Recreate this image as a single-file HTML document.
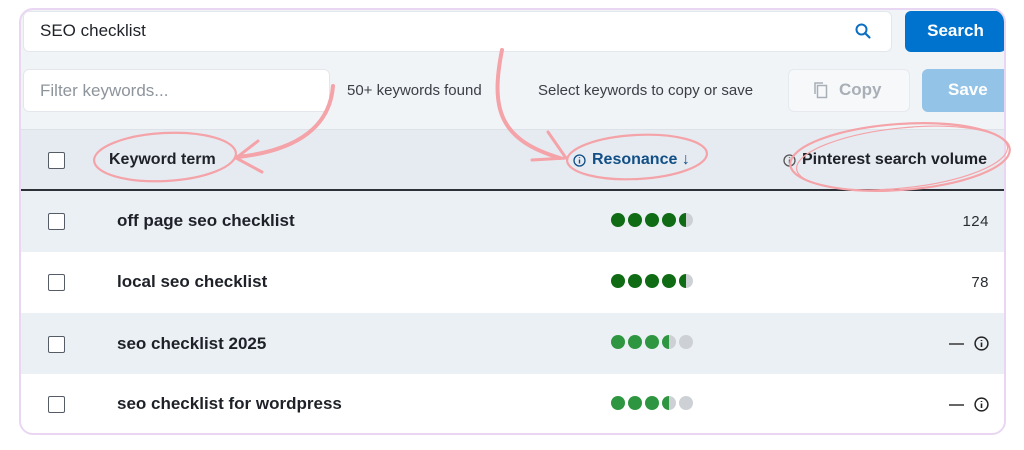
<!DOCTYPE html>
<html><head><style>
*{margin:0;padding:0;box-sizing:border-box}
body{width:1024px;height:450px;background:#fff;font-family:"Liberation Sans",sans-serif;position:relative;overflow:hidden;color:#1e2228}
.frame{position:absolute;left:19px;top:8px;width:987px;height:427px;border:2px solid #e9d6f3;border-radius:14px;background:#f1f4f7;overflow:hidden}
.abs{position:absolute}
.inp{background:#fff;border:1px solid #e3e7ec;border-radius:6px}
.row{position:absolute;left:0;width:985px;height:61px}
.cb{position:absolute;left:27px;width:17px;height:17px;border:1.5px solid #555c66;border-radius:2px;background:#fff}
.kw{position:absolute;left:96px;font-weight:bold;font-size:17px;line-height:20px}
.dots{position:absolute;left:590px;display:flex;gap:3px}
.d{width:14px;height:14px;border-radius:50%}
.g1{background:#0f6b14}.g2{background:#2e9640}.gr{background:#cdd1d6}
.h1{background:linear-gradient(90deg,#0f6b14 50%,#cdd1d6 50%)}
.h2{background:linear-gradient(90deg,#2e9640 50%,#cdd1d6 50%)}
.num{position:absolute;right:17px;font-size:15px;line-height:20px;color:#2a2e34;letter-spacing:0.5px}
.dash{position:absolute;right:17px;display:flex;align-items:center;gap:10px}
</style></head><body>
<div class="frame">
 <div class="abs inp" style="left:2px;top:1px;width:869px;height:41px"></div>
 <div class="abs" style="left:19px;top:11px;font-size:17px">SEO checklist</div>
 <svg class="abs" style="left:833px;top:12px" width="18" height="18" viewBox="0 0 18 18"><circle cx="7.5" cy="7.5" r="5" fill="none" stroke="#0a6fc2" stroke-width="2"/><path d="M11 11l4.5 4.5" stroke="#0a6fc2" stroke-width="2.2" stroke-linecap="round"/></svg>
 <div class="abs" style="left:884px;top:1px;width:101px;height:41px;background:#0073cf;border-radius:6px;color:#fff;font-weight:bold;font-size:17px;text-align:center;line-height:40px">Search</div>
 <div class="abs inp" style="left:2px;top:59px;width:307px;height:43px"></div>
 <div class="abs" style="left:19px;top:71px;font-size:17px;color:#8e949c">Filter keywords...</div>
 <div class="abs" style="left:326px;top:72px;font-size:15px;color:#3a3f46">50+ keywords found</div>
 <div class="abs" style="left:517px;top:72px;font-size:15px;color:#3a3f46">Select keywords to copy or save</div>
 <div class="abs" style="left:767px;top:59px;width:122px;height:43px;border:1px solid #e6e9ed;border-radius:6px;background:#f6f8fa"></div>
 <svg class="abs" style="left:792px;top:71px" width="16" height="18" viewBox="0 0 16 18"><rect x="4.5" y="4.5" width="9" height="12" fill="none" stroke="#a9afb7" stroke-width="1.5"/><path d="M2 13V2h8" fill="none" stroke="#a9afb7" stroke-width="1.5"/></svg>
 <div class="abs" style="left:818px;top:70px;font-size:17px;font-weight:bold;color:#a9afb7">Copy</div>
 <div class="abs" style="left:901px;top:59px;width:90px;height:43px;border-radius:6px;background:#93c3e6;color:#fff;font-weight:bold;font-size:17px;line-height:42px;padding-left:26px">Save</div>
 <div class="abs" style="left:0;top:119px;width:985px;height:62px;background:#e6ebf1;border-top:1px solid #dde2e8;border-bottom:2px solid #2c3138"></div>
 <div class="cb" style="top:142px"></div>
 <div class="abs" style="left:88px;top:141px;font-weight:bold;font-size:16px">Keyword term</div>
 <svg class="abs" style="left:552px;top:144px" width="13" height="13" viewBox="0 0 13 13"><circle cx="6.5" cy="6.5" r="5.5" fill="none" stroke="#114f86" stroke-width="1.3"/><path d="M6.5 5.5v4M6.5 3.3v.8" stroke="#114f86" stroke-width="1.4"/></svg>
 <div class="abs" style="left:571px;top:141px;font-weight:bold;font-size:16px;color:#114f86">Resonance ↓</div>
 <svg class="abs" style="left:762px;top:144px" width="13" height="13" viewBox="0 0 13 13"><circle cx="6.5" cy="6.5" r="5.5" fill="none" stroke="#555" stroke-width="1.3"/><path d="M6.5 5.5v4M6.5 3.3v.8" stroke="#555" stroke-width="1.4"/></svg>
 <div class="abs" style="left:781px;top:141px;font-weight:bold;font-size:16px">Pinterest search volume</div>
 <div class="row" style="top:181px;background:#ebf0f5"><div class="cb" style="top:22px"></div><div class="kw" style="top:20px">off page seo checklist</div><div class="dots" style="top:22px"><div class="d g1"></div><div class="d g1"></div><div class="d g1"></div><div class="d g1"></div><div class="d h1"></div></div><div class="num" style="top:21px">124</div></div>
 <div class="row" style="top:242px;background:#fff"><div class="cb" style="top:22px"></div><div class="kw" style="top:20px">local seo checklist</div><div class="dots" style="top:22px"><div class="d g1"></div><div class="d g1"></div><div class="d g1"></div><div class="d g1"></div><div class="d h1"></div></div><div class="num" style="top:21px">78</div></div>
 <div class="row" style="top:303px;background:#ebf0f5"><div class="cb" style="top:23px"></div><div class="kw" style="top:21px">seo checklist 2025</div><div class="dots" style="top:22px"><div class="d g2"></div><div class="d g2"></div><div class="d g2"></div><div class="d h2"></div><div class="d gr"></div></div>
  <div class="dash" style="top:23px"><div style="width:15px;height:2px;background:#666"></div><svg width="15" height="15" viewBox="0 0 15 15"><circle cx="7.5" cy="7.5" r="6.4" fill="none" stroke="#222" stroke-width="1.5"/><path d="M7.5 6.5v4.5M7.5 4v1" stroke="#222" stroke-width="1.6"/></svg></div></div>
 <div class="row" style="top:364px;background:#fff"><div class="cb" style="top:22px"></div><div class="kw" style="top:20px">seo checklist for wordpress</div><div class="dots" style="top:22px"><div class="d g2"></div><div class="d g2"></div><div class="d g2"></div><div class="d h2"></div><div class="d gr"></div></div>
  <div class="dash" style="top:23px"><div style="width:15px;height:2px;background:#666"></div><svg width="15" height="15" viewBox="0 0 15 15"><circle cx="7.5" cy="7.5" r="6.4" fill="none" stroke="#222" stroke-width="1.5"/><path d="M7.5 6.5v4.5M7.5 4v1" stroke="#222" stroke-width="1.6"/></svg></div></div>
</div>
<svg class="abs" style="left:0;top:0" width="1024" height="450" fill="none" stroke="#f4a3a8" stroke-width="2.2" stroke-linecap="round">
 <ellipse cx="165" cy="157" rx="71" ry="24" transform="rotate(-3 165 157)"/>
 <path d="M333 86C330 125 300 150 238 157" stroke-width="4"/>
 <path d="M258 141L236 158L262 172" stroke-width="3"/>
 <path d="M502 50C490 110 500 140 560 158" stroke-width="4"/>
 <path d="M548 132L566 158L532 160" stroke-width="3"/>
 <ellipse cx="637" cy="157" rx="70" ry="22" transform="rotate(-3 637 157)"/>
 <ellipse cx="900" cy="157" rx="110" ry="33" transform="rotate(-4 900 157)"/>
 <ellipse cx="902" cy="158" rx="106" ry="30" transform="rotate(-6 902 158)" stroke-width="1.2"/>
</svg>
</body></html>
